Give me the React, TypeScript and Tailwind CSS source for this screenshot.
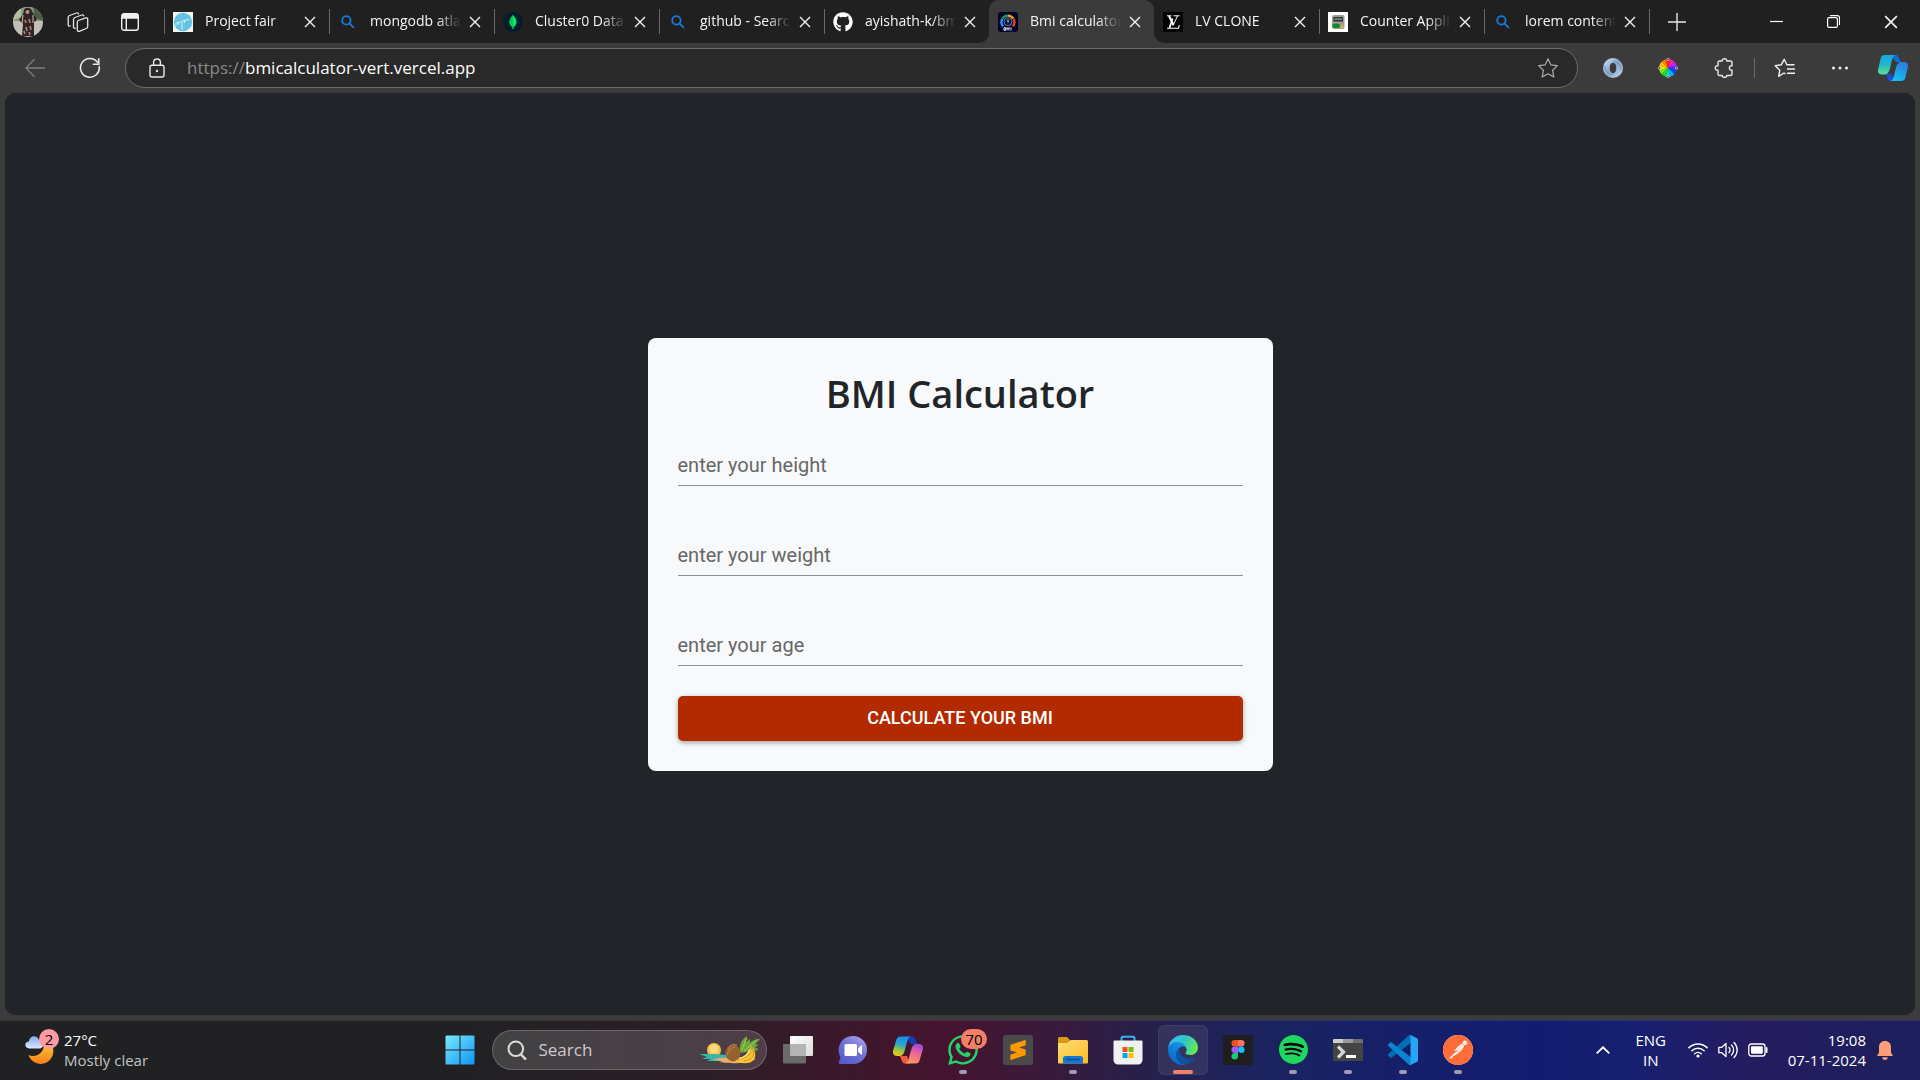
import { useState, type ReactNode } from "react";
import { FaGithub, FaWhatsapp } from "react-icons/fa";
import { SiPostman, SiSpotify, SiSublimetext } from "react-icons/si";

/* ---------- favicons ---------- */

function BingIcon() {
  return (
    <svg viewBox="0 0 20 20" className="size-5" fill="none" stroke="#1a7ad9" strokeWidth="1.8" strokeLinecap="round">
      <circle cx="8.4" cy="8.4" r="4.2" />
      <path d="M11.6 11.6 15.4 15.4" />
    </svg>
  );
}

function ProjectFairIcon() {
  return (
    <svg viewBox="0 0 20 20" className="size-5">
      <rect width="20" height="20" fill="#f6f3ee" />
      <circle cx="10" cy="10" r="9.2" fill="#62c4e4" />
      <path d="M3 11.200 8 9.800M3 11.200v2.500M5.500 10.500v2.500M9 9.200l7-1.800M9 9.200v9M11.500 8.800v2" stroke="#d5f0f8" strokeWidth="1" fill="none" />
    </svg>
  );
}

function MongoIcon() {
  return (
    <svg viewBox="0 0 20 20" className="size-5">
      <circle cx="10" cy="10" r="10" fill="#021e2b" />
      <path d="M10 3c2.300 2.400 3.500 4.600 3.500 7s-1.300 4-3 5.200V17h-1v-1.800C7.800 14 6.500 12.400 6.500 10S7.700 5.400 10 3Z" fill="#00ed64" />
      <path d="M10 3c-2.300 2.400-3.500 4.600-3.500 7s1.300 4 3 5.200V17h.5Z" fill="#0fbf57" />
    </svg>
  );
}

function BmiIcon() {
  return (
    <svg viewBox="0 0 20 20" className="size-5">
      <rect width="20" height="20" rx="3" fill="#04042a" />
      <g fill="none" strokeWidth="2.200">
        <path d="M5.200 14.200A6.200 6.200 0 0 1 4.500 6.600" stroke="#1ea0ff" />
        <path d="M4.700 6.300A6.200 6.200 0 0 1 10 3.600" stroke="#19a24a" />
        <path d="M10 3.600a6.200 6.200 0 0 1 5.300 3" stroke="#f6a11a" />
        <path d="M15.500 6.900a6.200 6.200 0 0 1-.7 7.300" stroke="#f04323" />
      </g>
      <circle cx="10" cy="9.700" r="4" fill="#0b1640" stroke="#9fb4d8" strokeWidth=".6" />
      <path d="M10 7.500v3" stroke="#e9efff" strokeWidth="1" />
      <path d="M6 15.500v3M6 15.700h1.500v2.600H6M9 18.500v-3l1 1.500 1-1.500v3M13 15.500v3" stroke="#dfe6f5" strokeWidth="1" fill="none" />
    </svg>
  );
}

function VuittonIcon() {
  return (
    <svg viewBox="0 0 20 20" className="size-5" fill="none" stroke="#fff">
      <rect width="20" height="20" fill="#000" stroke="none" />
      <path d="M4 3.800h4.500M10.500 3.800h6" strokeWidth="1" />
      <path d="M6 4l4.500 9" strokeWidth="1.900" />
      <path d="M14.500 4 10 13.500" strokeWidth="1" />
      <path d="M9.600 6.500 6.500 16" strokeWidth="1.700" />
      <path d="M4 16.200h11.500l.8-3" strokeWidth="1.100" />
    </svg>
  );
}

function CounterIcon() {
  return (
    <svg viewBox="0 0 20 20" className="size-5">
      <rect width="20" height="20" fill="#fff" />
      <rect x="4" y="3" width="12.500" height="14" rx="2" fill="#9a9c98" />
      <rect x="5.500" y="5" width="9.500" height="4.500" rx=".6" fill="#30332f" />
      <rect x="6.500" y="6.300" width="7.500" height="1.500" fill="#8c918a" />
      <ellipse cx="8.200" cy="13.700" rx="3.800" ry="2.300" fill="#0c8a1c" />
      <circle cx="14" cy="14.500" r="1.500" fill="#e8b33a" />
    </svg>
  );
}

/* ---------- browser chrome icons ---------- */

function Cross({ size = "size-3" }: { size?: string }) {
  return (
    <svg viewBox="0 0 12 12" className={size} fill="none" stroke="#f2f2f2" strokeWidth="1.400">
      <path d="m1 1 10 10M11 1 1 11" />
    </svg>
  );
}

function Avatar() {
  return (
    <svg viewBox="0 0 30 30" className="size-[30px] rounded-full">
      <rect width="30" height="30" fill="#c3beb6" />
      <rect width="30" height="14" fill="#8b9a7c" />
      <path d="M20 0h10v14l-8-3Z" fill="#4e5d48" />
      <path d="M0 0h8v10L0 13Z" fill="#b4bda2" />
      <path d="M11 3c1-3 7-3 8 1l3 5 2 4-3 2 0 14H9l1-12-4-4 4-6Z" fill="#2e2426" />
      <circle cx="14.500" cy="5" r="2" fill="#b98f7d" />
      <path d="M12 13l1 3M16 12l1 4M13 20l1 4M17 19l1 4M11 24l1 3M16 25l1 3" stroke="#b27f72" strokeWidth="1.700" />
      <path d="M10 8l-1 9M20 8v8" stroke="#d6bdb0" strokeWidth="1" />
    </svg>
  );
}

function WorkspacesIcon() {
  return (
    <svg viewBox="0 0 22 22" className="size-[22px]" fill="none" stroke="#e4e4e4" strokeWidth="1.300" strokeLinejoin="round" strokeLinecap="round">
      <path d="M11 9.500 19 6.800c1-.3 1.700.2 1.700 1.200v7.500c0 1-.5 1.700-1.500 2l-7 2.800c-1 .4-1.900-.1-1.900-1.200v-7.800c0-1 .2-1.500.7-1.800Z" />
      <path d="M8.300 17.200c-1.200.4-1.800-.2-1.800-1.300V8.600c0-1 .4-1.700 1.400-2.100L14.800 4c1-.3 1.800 0 2 .9" />
      <path d="M3.200 15C2 15.400 1.200 14.800 1.200 13.700V6.600c0-1 .4-1.700 1.400-2.100L9.500 2c1-.3 1.800 0 2 .9" />
    </svg>
  );
}

function TabActionsIcon() {
  return (
    <svg viewBox="0 0 20 20" className="size-5" fill="none" stroke="#f0f0f0" strokeWidth="1.400">
      <rect x="1.700" y="1.700" width="16.600" height="16.600" rx="2.500" />
      <path d="M2 4.200A2.400 2.400 0 0 1 4.300 2h11.400A2.400 2.400 0 0 1 18 4.200V6H2Z" fill="#f0f0f0" />
      <path d="M6.300 6v12" />
    </svg>
  );
}

function BackIcon() {
  return (
    <svg viewBox="0 0 20 20" className="size-5" fill="none" stroke="#7f7f7f" strokeWidth="1.300">
      <path d="M20 10H1M9.500 1.300.8 10l8.700 8.700" />
    </svg>
  );
}

function RefreshIcon() {
  return (
    <svg viewBox="0 0 22 22" className="size-[22px]" fill="none" stroke="#ececec" strokeWidth="1.500" strokeLinecap="round">
      <path d="M20.200 9.500A9.400 9.400 0 1 1 18.500 5.300" />
      <path d="M19.800 1.800v5.400h-5.400" />
    </svg>
  );
}

function LockIcon() {
  return (
    <svg viewBox="0 0 20 20" className="size-5" fill="none" stroke="#e8e8e8" strokeWidth="1.400">
      <rect x="3" y="7.200" width="14" height="11.800" rx="2" />
      <path d="M6.600 7V4.400a3.400 3.400 0 0 1 6.800 0V7" />
      <circle cx="10" cy="13" r="1.200" fill="#e8e8e8" stroke="none" />
    </svg>
  );
}

function StarIcon() {
  return (
    <svg viewBox="0 0 22 22" className="size-[22px]" fill="none" stroke="#a9a9a9" strokeWidth="1.200" strokeLinejoin="round">
      <path d="m11 1.800 2.800 6 6.500.9-4.700 4.600 1.200 6.600L11 16.700l-5.800 3.200 1.200-6.600L1.700 8.700l6.500-.9Z" />
    </svg>
  );
}

function RingExtensionIcon() {
  return (
    <svg viewBox="0 0 20 20" className="size-5">
      <defs>
        <linearGradient id="ring" x1="0" y1="0" x2="1" y2="1">
          <stop offset="0" stopColor="#d3e3f4" />
          <stop offset=".5" stopColor="#87a6cb" />
          <stop offset="1" stopColor="#cadcf0" />
        </linearGradient>
      </defs>
      <path fillRule="evenodd" fill="url(#ring)" d="M10 0a10 10 0 1 1 0 20 10 10 0 0 1 0-20Zm0 4.800C7.800 4.800 6.800 7 6.800 10S7.800 15.200 10 15.200s3.200-2.200 3.200-5.200S12.200 4.800 10 4.800Z" />
      <path d="M2 8c0 5 3 8.500 8 8.500M18 12c0-5-3-8.500-8-8.500" fill="none" stroke="#6d8db8" strokeWidth="1" />
    </svg>
  );
}

const WHEEL = ["#ff7a00", "#ff2020", "#ff1fa0", "#c81fff", "#4a2bff", "#0046ff", "#00b4ff", "#00e0b0", "#12e03c", "#6cf000", "#e6f000", "#ffc400"];

function ColorWheelIcon() {
  return (
    <svg viewBox="0 0 20 20" className="size-5">
      {WHEEL.map((color, i) => (
        <path key={color} d="M10 10 7.670 1.310A9 9 0 0 1 12.330 1.310Z" fill={color} transform={`rotate(${i * 30 - 30} 10 10)`} />
      ))}
      <g fill="#555" stroke="#ddd" strokeWidth=".6">
        <circle cx="10" cy="1.500" r="1.300" />
        <circle cx="18.500" cy="10" r="1.300" />
        <circle cx="10" cy="18.500" r="1.300" />
        <circle cx="1.500" cy="10" r="1.300" />
      </g>
    </svg>
  );
}

function ExtensionsIcon() {
  return (
    <svg viewBox="0 0 20 20" className="size-5" fill="none" stroke="#e8e8e8" strokeWidth="1.400" strokeLinejoin="round">
      <path d="M4 4.500A1.500 1.500 0 0 1 5.500 3H8.200c-.3-3 4.900-3 4.600 0h3.700A1.500 1.500 0 0 1 18 4.500V7.800c-3.500-.6-3.500 5 0 4.400v3.800a1.500 1.500 0 0 1-1.500 1.500h-3.700c.2 2.300-4.800 2.300-4.600 0H5.500A1.500 1.500 0 0 1 4 16v-3.700c-3.600.4-3.600-5 0-4.600Z" />
    </svg>
  );
}

function FavoritesIcon() {
  return (
    <svg viewBox="0 0 22 20" className="h-5 w-[22px]" fill="none" stroke="#f0f0f0" strokeWidth="1.400" strokeLinejoin="round">
      <path d="M11.500 15.800 10 15l-5.300 3.300L5.800 12.200 1.200 7.700l6-.9L10.200 1.300l2.700 5.500h7.600" />
      <path d="M13 11h8M13 15.200h8" />
    </svg>
  );
}

function CopilotBlueIcon() {
  return (
    <svg viewBox="0 0 30 28" className="h-7 w-[30px]">
      <defs>
        <linearGradient id="cbl" x1="0" y1="0" x2="0" y2="1">
          <stop offset="0" stopColor="#1aa5e6" />
          <stop offset=".5" stopColor="#22b8c8" />
          <stop offset="1" stopColor="#62e08c" />
        </linearGradient>
        <linearGradient id="cbr" x1=".7" y1="0" x2=".2" y2="1">
          <stop offset="0" stopColor="#2a7de0" />
          <stop offset="1" stopColor="#13c4f2" />
        </linearGradient>
      </defs>
      <path d="M13 1h5c3.500 0 3 7 6 7h-6l-5-6Z" fill="#0b6fd0" />
      <path d="M7 20h7l3 7h-4c-4 0-4-7-6-7Z" fill="#1b4fd6" />
      <path d="M6.500 1h11C13.500 2.500 14 8 12 14c-1.500 5-2.500 6.500-6 6.500H4c-3 0-4.500-2-4-4.500L2.500 5c.5-2.500 2-4 4-4Z" fill="url(#cbl)" />
      <path d="M23.500 27h-11c4-1.500 3.500-7 5.500-13 1.500-5 2.500-6 6-6h2c3 0 4.500 1.500 4 4.500L27.500 23c-.5 2.500-2 4-4 4Z" fill="url(#cbr)" />
    </svg>
  );
}

/* ---------- taskbar icons ---------- */

function WeatherIcon() {
  return (
    <svg viewBox="0 0 30 30" className="size-[30px]">
      <defs>
        <linearGradient id="moon" x1="0" y1="0" x2="0" y2="1">
          <stop offset="0" stopColor="#fbc02d" />
          <stop offset="1" stopColor="#f57c1f" />
        </linearGradient>
        <linearGradient id="cloud" x1="0" y1="0" x2="0" y2="1">
          <stop offset="0" stopColor="#83aaf0" />
          <stop offset="1" stopColor="#dbe8ff" />
        </linearGradient>
      </defs>
      <path d="M27.500 11c3 8-2 18-11.500 18C10 29 5.500 25.500 3.500 20c7 3 14-1 15.500-9Z" fill="url(#moon)" />
      <path d="M4.500 13.500C-1 13.500-1 6.500 4 6.500 4.500.5 12-.5 13.500 4.500c5-.5 6.500 8.500 1.500 9Z" fill="url(#cloud)" />
    </svg>
  );
}

function WindowsIcon() {
  return (
    <svg viewBox="0 0 30 30" className="size-[30px]">
      <defs>
        <linearGradient id="win" gradientUnits="userSpaceOnUse" x1="0" y1="0" x2="30" y2="30">
          <stop offset="0" stopColor="#7deafd" />
          <stop offset="1" stopColor="#0a95f8" />
        </linearGradient>
      </defs>
      <path d="M.5 1.500a1 1 0 0 1 1-1H14.500V14.500H.5ZM15.500.5H28.500a1 1 0 0 1 1 1V14.500H15.500ZM.5 15.500H14.500V29.500H1.500a1 1 0 0 1-1-1ZM15.500 15.500H29.500V28.500a1 1 0 0 1-1 1H15.500Z" fill="url(#win)" />
    </svg>
  );
}

function SearchGlass() {
  return (
    <svg viewBox="0 0 20 20" className="size-5" fill="none" stroke="#dedbdd" strokeWidth="2" strokeLinecap="round">
      <circle cx="8.800" cy="8.800" r="7.300" />
      <path d="m14 14.500 4.300 4.300" strokeWidth="2.400" />
    </svg>
  );
}

function TropicalArt() {
  return (
    <svg viewBox="0 0 62 32" className="h-8 w-[62px]">
      <circle cx="16" cy="16" r="7" fill="#fcbf49" />
      <circle cx="16" cy="15" r="4.500" fill="#ffdc7a" />
      <path d="M1 20h15l14 1v6H9l4-2H4l5-2Z" fill="#36b7ab" />
      <path d="M14 26c8-3 22-3 44-1l-7 3c-8 2-25 1-30 0l4-1Z" fill="#eab06a" />
      <path d="M42 19c-1-8 1-13 7-17l-1 6 4-3v4c4-4 8-4.500 10-3.500l-5 4.500 4 1-4 2 4 3-7 1Z" fill="#6ca83a" />
      <path d="M44 16c2-5 3-9 5-12M46 17l12-10" stroke="#a8d35a" fill="none" />
      <ellipse cx="35" cy="19" rx="7.500" ry="8.500" fill="#96602f" />
      <path d="M30 15c2-4 5-5 9-4M29 21c1-4 4-7 8-8" stroke="#c0894f" fill="none" />
      <path d="M53 12c6 5 6 14-1 16.500-6 1.500-12 .5-14-2.500 9-1 13-6 15-14Z" fill="#fbc437" />
      <path d="M53 13c1 6-3 11-13 12.500M54 14c4 7 0 12-8 13" stroke="#d79018" fill="none" />
      <path d="M41 24.500c5-1 9-4 11-9" stroke="#ffe68a" strokeWidth="1.500" fill="none" />
    </svg>
  );
}

function TaskViewIcon() {
  return (
    <svg viewBox="0 0 30 30" className="size-[30px]">
      <defs>
        <linearGradient id="tv" x1="0" y1="0" x2="1" y2="1">
          <stop offset="0" stopColor="#fff" />
          <stop offset="1" stopColor="#dcdcdc" />
        </linearGradient>
      </defs>
      <rect x="7" y="1" width="23" height="20" rx="1" fill="url(#tv)" />
      <rect x="0" y="9" width="23" height="19.500" rx="1" fill="#6b6b6b" />
      <path d="M7 9h15a1 1 0 0 1 1 1v11H8a1 1 0 0 1-1-1Z" fill="#b4b4b4" />
    </svg>
  );
}

function ChatIcon() {
  return (
    <svg viewBox="0 0 30 30" className="size-[30px]">
      <defs>
        <linearGradient id="chat" x1="0" y1="1" x2=".7" y2="0">
          <stop offset="0" stopColor="#5356cc" />
          <stop offset=".6" stopColor="#6f72d4" />
          <stop offset="1" stopColor="#a39aea" />
        </linearGradient>
      </defs>
      <path d="M15 1a14 14 0 1 1 0 28H2c-1 0-1.500-.8-1.200-1.700L2.500 22A14 14 0 0 1 15 1Z" fill="url(#chat)" />
      <rect x="6.500" y="9" width="12.500" height="12" rx="1.500" fill="#fff" />
      <path d="M20 13.500 23 10.500c.6-.5 1-.3 1 .4v8.200c0 .7-.4.9-1 .4l-3-3Z" fill="#fff" />
    </svg>
  );
}

function CopilotIcon() {
  return (
    <svg viewBox="0 0 30 28" className="h-7 w-[30px]">
      <defs>
        <linearGradient id="cpl" x1=".5" y1="0" x2=".2" y2="1">
          <stop offset="0" stopColor="#1a8df0" />
          <stop offset=".4" stopColor="#26a8c4" />
          <stop offset=".7" stopColor="#9bc83f" />
          <stop offset="1" stopColor="#f5c21c" />
        </linearGradient>
        <linearGradient id="cpr" x1=".6" y1="0" x2=".3" y2="1">
          <stop offset="0" stopColor="#a04be0" />
          <stop offset=".45" stopColor="#f06590" />
          <stop offset="1" stopColor="#fb9a5a" />
        </linearGradient>
      </defs>
      <path d="M13 .5h6c4 0 3.500 7.500 6 7.500h-7l-5-7Z" fill="#123fb5" />
      <path d="M6 20h8l3 7.500h-5c-4 0-3.500-7.500-6-7.500Z" fill="#ef5a3c" />
      <path d="M7.500.5H18c-4 1.500-4 7-6 13-1.500 5-2.500 6.500-6 6.500H4c-3 0-4.500-2-4-5L3 5C3.500 2 5 .5 7.500.5Z" fill="url(#cpl)" />
      <path d="M22.500 27.500H12c4-1.500 4-7 6-13 1.500-5 2.500-6.500 6-6.500h2c3 0 4.500 2 4 5l-3 10c-.5 3-2 4.500-4.500 4.500Z" fill="url(#cpr)" />
    </svg>
  );
}

function FolderIcon() {
  return (
    <svg viewBox="0 0 30 30" className="size-[30px]">
      <defs>
        <linearGradient id="fold" x1="0" y1="0" x2="1" y2="1">
          <stop offset="0" stopColor="#ffdd75" />
          <stop offset="1" stopColor="#fbbc24" />
        </linearGradient>
      </defs>
      <path d="M0 3.500A1.500 1.500 0 0 1 1.500 2H9l3.500 3.500L9 10H0Z" fill="#d89a12" />
      <path d="M0 8h9l4-3h15.500A1.500 1.500 0 0 1 30 6.500v21a1 1 0 0 1-1 1H1a1 1 0 0 1-1-1Z" fill="url(#fold)" />
      <path d="M5 28.500v-5A2.500 2.500 0 0 1 7.500 21h15a2.500 2.500 0 0 1 2.500 2.500v5Z" fill="#1578d0" />
      <path d="M9 24.500h12" stroke="#0a4c93" strokeWidth="1.500" strokeLinecap="round" />
    </svg>
  );
}

function StoreIcon() {
  return (
    <svg viewBox="0 0 30 30" className="size-[30px]">
      <path d="M8.500 6V3A1.500 1.500 0 0 1 10 1.700h10A1.500 1.500 0 0 1 21.500 3v3" fill="none" stroke="#2fb4ee" strokeWidth="2" />
      <path d="M.5 6.500a1 1 0 0 1 1-1h27a1 1 0 0 1 1 1V25a4.500 4.500 0 0 1-4.500 4.500H5A4.500 4.500 0 0 1 .5 25Z" fill="#f1f1f1" />
      <rect x="9.500" y="12" width="5" height="5" fill="#f25022" />
      <rect x="15.500" y="12" width="5" height="5" fill="#7fba00" />
      <rect x="9.500" y="18" width="5" height="5" fill="#00a4ef" />
      <rect x="15.500" y="18" width="5" height="5" fill="#ffb900" />
    </svg>
  );
}

function EdgeIcon() {
  return (
    <svg viewBox="0 0 257 257" className="size-[30px]">
      <defs>
        <linearGradient id="eg1" x1="0" y1="0" x2="1" y2="0">
          <stop offset="0" stopColor="#0c59a4" />
          <stop offset="1" stopColor="#114a8b" />
        </linearGradient>
        <linearGradient id="eg2" x1=".8" y1="0" x2=".3" y2="1">
          <stop offset="0" stopColor="#1b9de2" />
          <stop offset=".6" stopColor="#0c7ad6" />
          <stop offset="1" stopColor="#0f62c4" />
        </linearGradient>
        <linearGradient id="eg3" x1="0" y1=".3" x2="1" y2=".6">
          <stop offset="0" stopColor="#35c1f1" />
          <stop offset=".5" stopColor="#2fc6c8" />
          <stop offset="1" stopColor="#66eb4e" />
        </linearGradient>
      </defs>
      <path fill="url(#eg1)" d="M231 190.500c-3.400 1.800-6.900 3.400-10.500 4.700a101.500 101.500 0 0 1-35.600 6.400c-47 0-87.900-32.300-87.900-73.800a31.300 31.300 0 0 1 16.300-27.100c-42.500 1.800-53.400 46.100-53.400 72 0 73.400 67.700 80.900 82.200 80.900 7.900 0 19.800-2.300 26.900-4.600l1.300-.4a128.300 128.300 0 0 0 66.600-52.800 4 4 0 0 0-5.900-5.300Z" />
      <path fill="url(#eg2)" d="M105.700 241.400a79.200 79.200 0 0 1-22.700-21.300 80.700 80.700 0 0 1 29.600-119.300c3.100-1.500 8.500-4.100 15.600-4a32.400 32.400 0 0 1 25.700 13 31.900 31.900 0 0 1 6.300 18.700c0-.2 24.500-79.600-80-79.600-43.900 0-80 41.700-80 78.200a130.200 130.200 0 0 0 12.100 56 128 128 0 0 0 156.400 67.100 75.500 75.500 0 0 1-62.800-8.700Z" />
      <path fill="url(#eg3)" d="M152.300 148.900c-.8 1-3.300 2.500-3.300 5.700 0 2.600 1.700 5.100 4.700 7.300 14.500 10.100 41.800 8.700 41.900 8.700a60 60 0 0 0 30.500-8.500 61.900 61.900 0 0 0 30.400-53.400c.3-22.300-8-37.200-11.300-43.800C223.900 23.300 178.200 0 128.500 0A128 128 0 0 0 .2 126.500c.5-36.500 36.800-66 80-66 3.500 0 23.500.3 42 10.100a72.600 72.600 0 0 1 30.900 29.300c6.100 10.600 7.200 24 7.200 29.300s-2.700 13.300-8 19.700Z" />
    </svg>
  );
}

function FigmaIcon() {
  return (
    <svg viewBox="0 0 30 30" className="size-[30px]">
      <rect width="30" height="30" rx="2" fill="#1e1e1e" />
      <path d="M15 5h-3.300a3.250 3.250 0 0 0 0 6.500H15Z" fill="#f24e1e" />
      <path d="M15 5h3.300a3.250 3.250 0 0 1 0 6.500H15Z" fill="#ff7262" />
      <path d="M15 11.500h-3.300a3.250 3.250 0 0 0 0 6.500H15Z" fill="#a259ff" />
      <circle cx="18.300" cy="14.800" r="3.250" fill="#1abcfe" />
      <path d="M15 18h-3.300a3.250 3.250 0 1 0 3.300 3.300Z" fill="#0fcf6f" />
    </svg>
  );
}

function SpotifyIcon() {
  return (
    <span className="grid size-[29px] place-items-center rounded-full bg-black">
      <SiSpotify className="size-[29px] text-[#1ed760]" />
    </span>
  );
}

function TerminalIcon() {
  return (
    <svg viewBox="0 0 30 30" className="size-[30px]">
      <path d="M0 8h30v17a1 1 0 0 1-1 1H1a1 1 0 0 1-1-1Z" fill="#444" />
      <path d="M0 5a1 1 0 0 1 1-1h9v4H0Z" fill="#cfcfcf" />
      <path d="M10 4h10v4H10Z" fill="#9b9b9b" />
      <path d="M20 4h9a1 1 0 0 1 1 1v3H20Z" fill="#6f6f6f" />
      <path d="m5 11.500 5.500 5.500L5 22.500" fill="none" stroke="#d6d6d6" strokeWidth="3.200" />
      <path d="M13 21.500h10" stroke="#fff" strokeWidth="3" />
    </svg>
  );
}

function VsCodeIcon() {
  return (
    <svg viewBox="0 0 100 100" className="size-[30px]">
      <path fill="#0070b3" d="M96.460 10.800 75.860.88C73.470-.27 70.620.21 68.750 2.080L1.300 63.580c-1.820 1.660-1.810 4.510 0 6.170l5.510 5c1.490 1.350 3.720 1.450 5.320.23L93.360 13.400C96.090 11.300 100 13.270 100 16.700v-.24c0-2.400-1.380-4.600-3.540-5.660Z" />
      <path fill="#0a84d0" d="M96.460 89.200 75.860 99.120c-2.390 1.150-5.240.67-7.110-1.200L1.300 36.420c-1.820-1.660-1.810-4.510 0-6.170l5.510-5c1.490-1.350 3.720-1.450 5.320-.23L93.360 86.600C96.090 88.700 100 86.730 100 83.300v.24c0 2.400-1.380 4.600-3.540 5.660Z" />
      <path fill="#27a5f5" d="M75.860 99.130c-2.390 1.150-5.240.66-7.110-1.210C71.060 100.230 75 98.590 75 95.330V4.670C75 1.410 71.060-.23 68.750 2.080 70.620.21 73.470-.27 75.860.87L96.460 10.780C98.620 11.820 100 14.010 100 16.410v67.180c0 2.400-1.380 4.590-3.540 5.630Z" />
    </svg>
  );
}

function PostmanIcon() {
  return (
    <span className="grid size-[30px] place-items-center rounded-full bg-white">
      <SiPostman className="size-[30px] text-[#ff6c37]" />
    </span>
  );
}

function WifiIcon() {
  return (
    <svg viewBox="0 0 20 16" className="h-4 w-5" fill="none" stroke="#fff" strokeWidth="1.500" strokeLinecap="round">
      <path d="M.9 5.600a13 13 0 0 1 18.200 0M3.900 8.800a8.800 8.800 0 0 1 12.200 0M6.700 11.700a4.800 4.800 0 0 1 6.600 0" />
      <circle cx="10" cy="14" r="1.600" fill="#fff" stroke="none" />
    </svg>
  );
}

function SpeakerIcon() {
  return (
    <svg viewBox="0 0 20 18" className="h-[18px] w-5" fill="none" stroke="#fff" strokeWidth="1.300" strokeLinecap="round" strokeLinejoin="round">
      <path d="M.8 6.300h3L8 2.500v13l-4.200-3.800h-3Z" />
      <path d="M11 6.500a3.500 3.500 0 0 1 0 5M13.500 4a7 7 0 0 1 0 10M16 1.500a10.500 10.500 0 0 1 0 15" />
    </svg>
  );
}

function BatteryIcon() {
  return (
    <svg viewBox="0 0 20 14" className="h-3.5 w-5" fill="none" stroke="#fff" strokeWidth="1.300">
      <rect x=".8" y="1" width="16.200" height="12" rx="2.500" />
      <rect x="3" y="3.200" width="11.800" height="7.600" rx="1" fill="#fff" stroke="none" />
      <path d="M18.600 5v4" strokeWidth="1.800" strokeLinecap="round" />
    </svg>
  );
}

function BellIcon() {
  return (
    <svg viewBox="0 0 16 20" className="h-5 w-4" fill="#fb9d78">
      <path d="M8 1c3.700 0 6 2.600 6 6v5.500l1.600 2.400c.3.500 0 1.100-.6 1.100H1c-.6 0-.9-.6-.6-1.100L2 12.500V7c0-3.400 2.300-6 6-6ZM5.300 17.200h5.400a2.700 2.700 0 0 1-5.400 0Z" />
    </svg>
  );
}

/* ---------- browser ---------- */

type TabInfo = { title: string; icon: ReactNode; divider: boolean; active?: boolean };

const TABS: TabInfo[] = [
  { title: "Project fair", icon: <ProjectFairIcon />, divider: true },
  { title: "mongodb atla", icon: <BingIcon />, divider: true },
  { title: "Cluster0 Data", icon: <MongoIcon />, divider: true },
  { title: "github - Searc", icon: <BingIcon />, divider: true },
  { title: "ayishath-k/bm", icon: <FaGithub className="size-5 text-white" />, divider: true },
  { title: "Bmi calculator", icon: <BmiIcon />, divider: false, active: true },
  { title: "LV CLONE", icon: <VuittonIcon />, divider: false },
  { title: "Counter Appli", icon: <CounterIcon />, divider: true },
  { title: "lorem content", icon: <BingIcon />, divider: true },
];

function Flare({ side }: { side: "left" | "right" }) {
  return (
    <svg
      viewBox="0 0 10 10"
      className={side === "left" ? "absolute bottom-0 right-full size-2.5" : "absolute bottom-0 left-full size-2.5 -scale-x-100"}
    >
      <path d="M10 0v10H0A10 10 0 0 0 10 0Z" fill="#3b3b3b" />
    </svg>
  );
}

function Tab({ tab }: { tab: TabInfo }) {
  return (
    <div className={`relative flex h-full w-[165px] items-center pl-[9px] pr-[13px] ${tab.active ? "rounded-t-[10px] bg-[#3b3b3b]" : ""}`}>
      {tab.divider && <span className="absolute left-0 top-[9px] h-[25px] w-px bg-[#6a6a6a]" />}
      {tab.active && <Flare side="left" />}
      {tab.active && <Flare side="right" />}
      <button className="flex min-w-0 flex-1 items-center gap-3 text-left">
        <span className="shrink-0">{tab.icon}</span>
        <span className="min-w-0 flex-1 overflow-hidden whitespace-nowrap pb-0.5 text-[14px] leading-5 text-[#f5f5f5] [mask-image:linear-gradient(to_right,black_72%,transparent_98%)]">
          {tab.title}
        </span>
      </button>
      <button aria-label={`Close ${tab.title}`} className="ml-1.5 grid size-3 shrink-0 place-items-center">
        <Cross />
      </button>
    </div>
  );
}

function TabStrip() {
  return (
    <header className="flex h-[43px] shrink-0 items-center bg-[#202020]">
      <div className="flex w-[164px] shrink-0 items-center pl-[13px]">
        <button aria-label="Profile"><Avatar /></button>
        <button aria-label="Workspaces" className="ml-6"><WorkspacesIcon /></button>
        <button aria-label="Tab actions" className="ml-[31px]"><TabActionsIcon /></button>
      </div>
      <nav className="flex h-full" aria-label="Tabs">
        {TABS.map((tab) => <Tab key={tab.title} tab={tab} />)}
      </nav>
      <span className="h-[25px] w-px bg-[#6a6a6a]" />
      <button aria-label="New tab" className="ml-[18px]">
        <svg viewBox="0 0 18 18" className="size-[18px]" stroke="#e6e6e6" strokeWidth="1.400"><path d="M9 0v18M0 9h18" /></svg>
      </button>
      <div className="ml-auto flex items-center">
        <button aria-label="Minimize" className="grid h-[43px] w-[57px] place-items-center">
          <svg viewBox="0 0 13 13" className="size-[13px]" stroke="#fff" strokeWidth="1.200"><path d="M0 6.500h13" /></svg>
        </button>
        <button aria-label="Restore" className="grid h-[43px] w-[57px] place-items-center">
          <svg viewBox="0 0 13 13" className="size-[13px]" fill="none" stroke="#fff" strokeWidth="1.200">
            <rect x=".6" y="2.600" width="9.800" height="9.800" rx="1.500" />
            <path d="M3 .6h7.500a2 2 0 0 1 2 2V10" />
          </svg>
        </button>
        <button aria-label="Close window" className="grid h-[43px] w-[58px] place-items-center"><Cross size="size-3.5" /></button>
      </div>
    </header>
  );
}

function Toolbar() {
  return (
    <div className="flex h-[50px] shrink-0 items-center bg-[#3b3b3b] pl-[25px] pr-3">
      <button aria-label="Back"><BackIcon /></button>
      <button aria-label="Refresh" className="ml-[34px]"><RefreshIcon /></button>
      <div className="ml-6 flex h-10 flex-1 items-center rounded-full border border-[#6c6c6c] bg-[#292929] pl-[21px] pr-[18px]">
        <LockIcon />
        <span className="ml-5 text-[17px] leading-6 text-[#8a8a8a]">https://</span>
        <input
          aria-label="Address"
          defaultValue="bmicalculator-vert.vercel.app"
          className="min-w-0 flex-1 bg-transparent text-[17px] leading-6 text-white outline-none"
        />
        <button aria-label="Add to favorites"><StarIcon /></button>
      </div>
      <div className="ml-[25px] flex items-center">
        <button aria-label="Ring extension"><RingExtensionIcon /></button>
        <button aria-label="Color picker" className="ml-[35px]"><ColorWheelIcon /></button>
        <button aria-label="Extensions" className="ml-9"><ExtensionsIcon /></button>
        <span className="ml-5 h-5 w-px bg-[#6a6a6a]" />
        <button aria-label="Favorites" className="ml-[19px]"><FavoritesIcon /></button>
        <button aria-label="Settings and more" className="ml-[35px]">
          <svg viewBox="0 0 18 4" className="h-1 w-[18px]" fill="#f0f0f0"><circle cx="2.500" cy="2" r="1.500" /><circle cx="9" cy="2" r="1.500" /><circle cx="15.500" cy="2" r="1.500" /></svg>
        </button>
        <button aria-label="Copilot" className="ml-[29px]"><CopilotBlueIcon /></button>
      </div>
    </div>
  );
}

/* ---------- page ---------- */

const FIELDS = ["height", "weight", "age"];

function BmiCard() {
  const [values, setValues] = useState<Record<string, string>>({});
  return (
    <form
      onSubmit={(event) => event.preventDefault()}
      className="w-full max-w-[625px] rounded-lg bg-[#f8f9fa] p-[30px] text-[#212529]"
    >
      <h1 className="text-center text-[38px] font-semibold leading-[50px]">BMI Calculator</h1>
      <div className="mt-7 flex flex-col gap-[50px]">
        {FIELDS.map((field) => (
          <input
            key={field}
            aria-label={`enter your ${field}`}
            placeholder={`enter your ${field}`}
            value={values[field] ?? ""}
            onChange={(event) => setValues({ ...values, [field]: event.target.value })}
            className="h-10 w-full border-b border-[#8f9091] bg-transparent font-[Roboto,sans-serif] text-[20px] leading-7 outline-none placeholder:text-[#666768]"
          />
        ))}
      </div>
      <button
        type="submit"
        className="mt-[30px] h-[45px] w-full rounded-[5px] bg-[#b22a00] font-[Roboto,sans-serif] text-[18px] font-medium leading-7 text-white shadow-[0_2px_4px_rgba(0,0,0,0.25),0_1px_6px_rgba(0,0,0,0.12)]"
      >
        CALCULATE YOUR BMI
      </button>
    </form>
  );
}

/* ---------- taskbar ---------- */

type AppInfo = { name: string; icon: ReactNode; running?: boolean; active?: boolean; badge?: string };

const APPS: AppInfo[] = [
  { name: "Task view", icon: <TaskViewIcon /> },
  { name: "Chat", icon: <ChatIcon /> },
  { name: "Copilot", icon: <CopilotIcon /> },
  { name: "WhatsApp", icon: <FaWhatsapp className="size-[34px] text-[#25d366]" />, running: true, badge: "70" },
  {
    name: "Sublime Text",
    icon: (
      <span className="grid size-[30px] place-items-center rounded-[3px] bg-[#4a4a4a]">
        <SiSublimetext className="size-5 text-[#ff9800]" />
      </span>
    ),
  },
  { name: "File Explorer", icon: <FolderIcon />, running: true },
  { name: "Microsoft Store", icon: <StoreIcon /> },
  { name: "Edge", icon: <EdgeIcon />, active: true },
  { name: "Figma", icon: <FigmaIcon /> },
  { name: "Spotify", icon: <SpotifyIcon />, running: true },
  { name: "Terminal", icon: <TerminalIcon />, running: true },
  { name: "Visual Studio Code", icon: <VsCodeIcon />, running: true },
  { name: "Postman", icon: <PostmanIcon />, running: true },
];

function AppButton({ app }: { app: AppInfo }) {
  return (
    <button aria-label={app.name} className="grid h-[50px] w-[55px] place-items-center">
      <span className={`relative grid size-[50px] place-items-center rounded-md ${app.active ? "border border-white/5 bg-white/8" : ""}`}>
        {app.icon}
        {app.badge && (
          <span className="absolute left-[23px] top-1 grid h-5 w-[26px] place-items-center rounded-full bg-[#f47f66] text-[15px] leading-5 text-black">
            {app.badge}
          </span>
        )}
        {app.running && <span className="absolute inset-x-[21px] bottom-px h-1 rounded-full bg-[#a09db0]" />}
        {app.active && <span className="absolute inset-x-3.5 bottom-0 h-1 rounded-full bg-[#f4826a]" />}
      </span>
    </button>
  );
}

function Taskbar() {
  return (
    <footer className="flex h-[60px] shrink-0 items-center border-t border-white/10 bg-[linear-gradient(to_right,#202123_0%,#212123_24%,#2c1e26_37%,#3c182b_44%,#45142f_49%,#381a3c_55%,#26204c_60%,#1b2360_66%,#162068_72%,#141c70_80%,#171f70_85%,#251c60_91%,#1d1f5c_100%)] pb-0.5 text-[15px] leading-5 text-white">
      <div className="flex flex-1 items-center pl-[25px]">
        <button className="flex items-center gap-[9px] text-left">
          <span className="relative">
            <WeatherIcon />
            <span className="absolute -top-1.5 left-3.5 grid size-5 place-items-center rounded-full bg-[#ff99a4] text-[15px] leading-5 text-black">2</span>
          </span>
          <span>
            <span className="block">27°C</span>
            <span className="block text-[#c4c4c4]">Mostly clear</span>
          </span>
        </button>
      </div>
      <div className="flex items-center">
        <button aria-label="Start" className="grid h-[50px] w-[55px] place-items-center"><WindowsIcon /></button>
        <div className="mx-1 flex h-10 w-[275px] items-center rounded-full border border-white/20 bg-white/15 pl-3.5 pr-1.5">
          <SearchGlass />
          <input
            aria-label="Search"
            placeholder="Search"
            className="ml-3 min-w-0 flex-1 bg-transparent text-[17px] leading-6 outline-none placeholder:text-[#cfcacd]"
          />
          <TropicalArt />
        </div>
        {APPS.map((app) => <AppButton key={app.name} app={app} />)}
      </div>
      <div className="flex flex-1 items-center justify-end pr-[27px]">
        <button aria-label="Show hidden icons">
          <svg viewBox="0 0 14 8" className="h-2 w-3.5" fill="none" stroke="#fff" strokeWidth="1.800"><path d="m.7 7.300 6.300-6 6.300 6" /></svg>
        </button>
        <button className="ml-[25px] w-8 text-center"><span className="block">ENG</span><span className="block">IN</span></button>
        <button aria-label="Quick settings" className="ml-[21px] flex items-center gap-2.5"><WifiIcon /><SpeakerIcon /><BatteryIcon /></button>
        <button className="ml-5 text-right"><span className="block">19:08</span><span className="block">07-11-2024</span></button>
        <button aria-label="Notifications" className="ml-[11px]"><BellIcon /></button>
      </div>
    </footer>
  );
}

export default function App() {
  return (
    <div className="flex h-screen flex-col overflow-hidden bg-[#3b3b3b] font-['Open_Sans','Noto_Sans',sans-serif]">
      <TabStrip />
      <Toolbar />
      <main className="mx-[5px] mb-[5px] flex min-h-0 flex-1 items-center justify-center rounded-[10px] bg-[#212529]">
        <BmiCard />
      </main>
      <Taskbar />
    </div>
  );
}
